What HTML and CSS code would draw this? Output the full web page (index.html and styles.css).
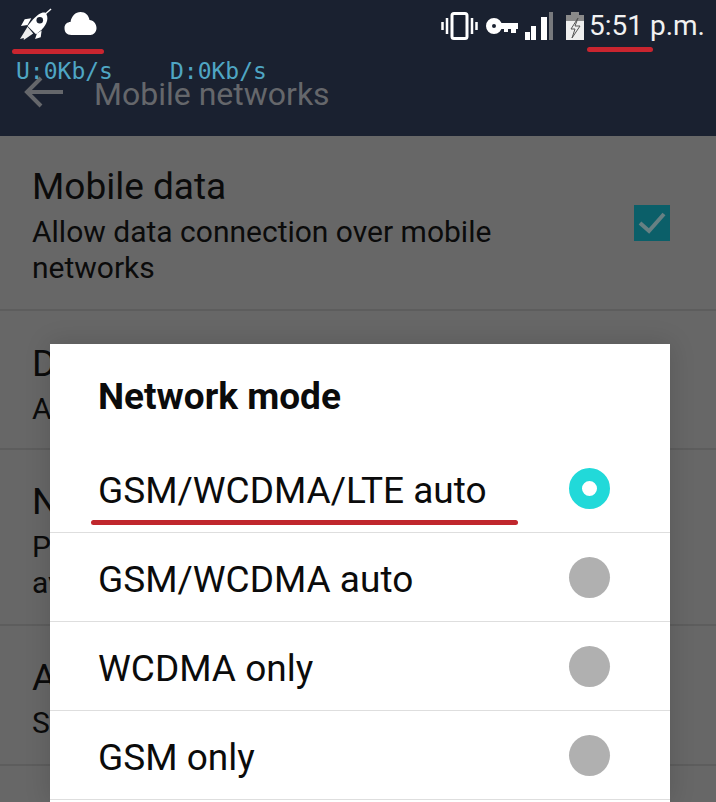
FILE: index.html
```html
<!DOCTYPE html>
<html lang="en">
<head>
  <meta charset="UTF-8" />
  <meta name="viewport" content="width=device-width, initial-scale=1" />
  <title>Mobile networks</title>
  <link rel="stylesheet" href="styles.css">
</head>
<body>

  <div class="statusbar">
    <div class="status-left">
      <svg class="ic-rocket" width="36" height="32" viewBox="0 0 36 34">
        <path d="M34 1 L26 8" stroke="#fff" stroke-width="1.5" fill="none"/>
        <path d="M28 5 C32 10 30 17 24 23 L18 28 L9 19 L15 12 C20 7 24 4 28 5 Z" fill="#fff"/>
        <circle cx="22" cy="13" r="3.5" fill="#1a2130"/>
        <path d="M13 11 L6 12 L2 19 L9 18 Z M24 24 L23 31 L17 33 L19 27 Z" fill="#fff"/>
        <path d="M9 20 L1 33 L5 32 L5 34 L15 27 Z" fill="#eee"/>
      </svg>
      <svg class="ic-cloud" width="33" height="23" viewBox="0 0 32 23">
        <path d="M7 23 C2 23 0 20 0 16 C0 12 3 10 6 10 C7 4 11 0 16 0 C21 0 24 3 25 8 C29 8 32 12 32 16 C32 20 29 23 26 23 Z" fill="#fff"/>
      </svg>
    </div>
    <div class="status-right">
      <svg class="ic-vibrate" width="37" height="28" viewBox="0 0 37 28">
        <rect x="11" y="1.5" width="15" height="25" rx="2" fill="none" stroke="#fff" stroke-width="3"/>
        <path d="M1.5 10 V18 M6 6 V22 M31 6 V22 M35.5 10 V18" stroke="#fff" stroke-width="2.5"/>
      </svg>
      <svg class="ic-key" width="32" height="18" viewBox="0 0 32 18">
        <circle cx="8" cy="9" r="5" fill="none" stroke="#fff" stroke-width="6"/>
        <path d="M14 6 H32 V12 H30 V16 H25 V12 H22 V15 H18 V12 H14 Z" fill="#fff"/>
      </svg>
      <svg class="ic-signal" width="28" height="28" viewBox="0 0 28 28">
        <rect x="0" y="20" width="5" height="8" fill="#fff"/>
        <rect x="6" y="14" width="5" height="14" fill="#fff"/>
        <rect x="16" y="5" width="6" height="23" fill="#fff"/>
        <rect x="24" y="0" width="4" height="28" fill="#77797d"/>
      </svg>
      <svg class="ic-battery" width="18" height="28" viewBox="0 0 18 28">
        <rect x="5" y="0" width="8" height="3" fill="#8a8a8a"/>
        <rect x="0" y="3" width="18" height="6" fill="#8a8a8a"/>
        <rect x="0" y="9" width="18" height="19" fill="#eee"/>
        <path d="M12 6 L5 17 H9 L6 26 L14 14 H9 Z" fill="none" stroke="#555" stroke-width="1"/>
      </svg>
      <span class="clock">5:51 p.m.</span>
    </div>
  </div>

  <div class="toolbar">
    <svg class="ic-back" width="40" height="32" viewBox="0 0 40 32">
      <path d="M39 16 H4 M17 2 L3 16 L17 30" fill="none" stroke="#65676b" stroke-width="4"/>
    </svg>
    <span class="toolbar-title">Mobile networks</span>
  </div>

  <div class="speed">
    <span>U:0Kb/s</span>
    <span>D:0Kb/s</span>
  </div>

  <div class="settings">
    <div class="row row-first">
      <div>
        <div class="row-title">Mobile data</div>
        <div class="row-sub">Allow data connection over mobile networks</div>
      </div>
      <div class="checkbox">
        <svg width="28" height="24" viewBox="0 0 28 24">
          <path d="M2 12 L11 20 L26 3" fill="none" stroke="#678083" stroke-width="4"/>
        </svg>
      </div>
    </div>
    <div class="row row-second">
      <div class="row-title">Data roaming</div>
      <div class="row-sub">Always connect</div>
    </div>
    <div class="row row-third">
      <div class="row-title">Network mode</div>
      <div class="row-sub">Preferred network type, use only if available</div>
    </div>
    <div class="row row-fourth">
      <div class="row-title">Access point names</div>
      <div class="row-sub">Set up</div>
    </div>
  </div>

  <div class="dialog">
    <div class="dialog-title">Network mode</div>
    <div class="option">
      <span>GSM/WCDMA/LTE auto</span>
      <i class="radio radio-on"></i>
    </div>
    <div class="option">
      <span>GSM/WCDMA auto</span>
      <i class="radio"></i>
    </div>
    <div class="option">
      <span>WCDMA only</span>
      <i class="radio"></i>
    </div>
    <div class="option">
      <span>GSM only</span>
      <i class="radio"></i>
    </div>
  </div>

  <!-- rayas rojas encima de la captura -->
  <div class="mark mark-icons"></div>
  <div class="mark mark-clock"></div>
  <div class="mark mark-option"></div>

</body>
</html>
```

FILE: styles.css
```css
* {
  box-sizing: border-box;
}

html, body {
  height: 100%;
}

body {
  margin: 0;
  position: relative;
  overflow: hidden;
  background: #676767;
  font-family: 'Roboto', 'Liberation Sans', sans-serif;
  color: #0b0b0b;
}

.statusbar {
  height: 46px;
  background: #1a2130;
  display: flex;
  justify-content: space-between;
  align-items: flex-start;
  padding: 8px 11px 0 18px;
}

.status-left {
  display: flex;
  align-items: flex-start;
  gap: 10px;
}

.ic-cloud {
  margin-top: 4px;
}

.status-right {
  display: flex;
  align-items: center;
  margin-top: 2px;
}

.ic-vibrate {
  margin-right: 8px;
}

.ic-key {
  margin-right: 7px;
}

.ic-signal {
  margin-right: 13px;
}

.ic-battery {
  margin-right: 5px;
}

.clock {
  font-size: 28px;
  line-height: 32px;
  color: #f1f1f1;
}

.toolbar {
  height: 90px;
  background: #1a2130;
  display: flex;
  align-items: flex-start;
  padding: 30px 0 0 24px;
}

.toolbar-title {
  margin-left: 30px;
  font-size: 32px;
  line-height: 36px;
  color: #65676b;
}

.speed {
  position: absolute;
  top: 57px;
  left: 16px;
  display: flex;
  gap: 57px;
  font-family: 'DejaVu Sans Mono', monospace;
  font-size: 23px;
  line-height: 28px;
  color: #4fa6c4;
}

.row {
  border-bottom: 2px solid #5d5d5d;
  padding: 0 32px;
}

.row-first {
  height: 175px;
  padding-top: 30px;
  display: flex;
  justify-content: space-between;
}

.row-second {
  height: 139px;
  padding-top: 32px;
}

.row-third {
  height: 176px;
  padding-top: 31px;
}

.row-fourth {
  height: 140px;
  padding-top: 31px;
}

.row-title {
  font-size: 37px;
  line-height: 42px;
}

.row-sub {
  max-width: 480px;
  margin-top: 6px;
  font-size: 30px;
  line-height: 36px;
}

.checkbox {
  width: 36px;
  height: 36px;
  margin: 39px 14px 0 0;
  flex: none;
  background: #0b5f69;
  display: flex;
  align-items: center;
  justify-content: center;
}

.dialog {
  position: absolute;
  top: 344px;
  left: 50px;
  width: 620px;
  bottom: 0;
  background: #fff;
  box-shadow: 0 0 24px rgba(0, 0, 0, 0.15);
}

.dialog-title {
  height: 100px;
  padding: 30px 48px 0;
  font-size: 37px;
  line-height: 46px;
  font-weight: 700;
}

.option {
  height: 89px;
  padding: 0 60px 0 48px;
  border-bottom: 1px solid #dedede;
  display: flex;
  align-items: center;
  justify-content: space-between;
  font-size: 37px;
}

.option span {
  margin-top: 4px;
}

.radio {
  width: 41px;
  height: 41px;
  border-radius: 50%;
  background: #b0b0b0;
}

.radio-on {
  background: #fff;
  border: 13px solid #21d9d9;
}

.mark {
  position: absolute;
  height: 5px;
  border-radius: 3px;
  background: #c9252f;
}

.mark-icons {
  top: 49px;
  left: 12px;
  width: 92px;
}

.mark-clock {
  top: 47px;
  left: 587px;
  width: 66px;
}

.mark-option {
  top: 520px;
  left: 91px;
  width: 427px;
  background: #c0272d;
}
```
